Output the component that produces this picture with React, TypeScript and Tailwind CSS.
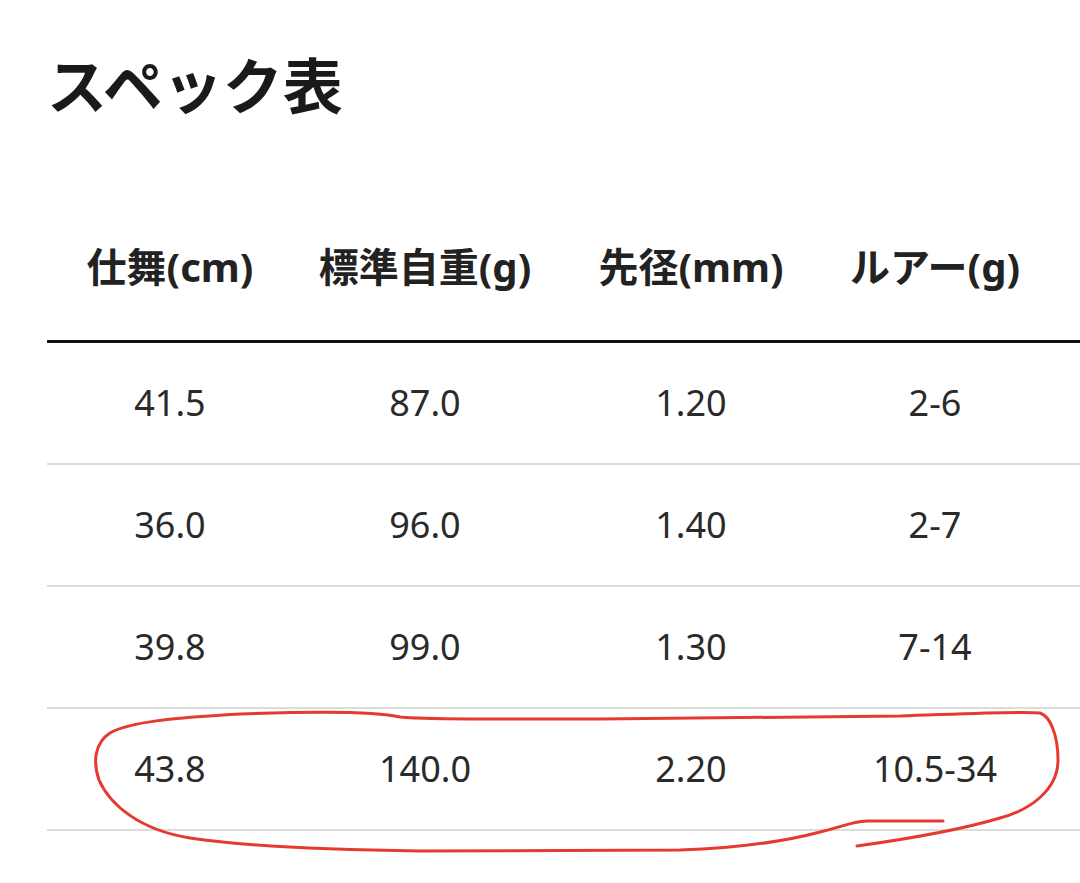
const headers = ['仕舞(cm)', '標準自重(g)', '先径(mm)', 'ルアー(g)']

const rows = [
  ['41.5', '87.0', '1.20', '2-6'],
  ['36.0', '96.0', '1.40', '2-7'],
  ['39.8', '99.0', '1.30', '7-14'],
  ['43.8', '140.0', '2.20', '10.5-34'],
]

const cols = 'grid grid-cols-[246px_264px_268px_220px]'

// hand-drawn red circle around the last row
const Scribble = () => (
  <svg
    className="pointer-events-none absolute left-0 top-0"
    width="1080"
    height="883"
    viewBox="0 0 1080 883"
    fill="none"
  >
    <path
      d="M943 821 L867 821 C850 822 845 826 820 832 C790 840 740 848 680 850 L420 851 C330 850 250 847 190 838 C140 830 110 805 99 780 C92 760 96 742 110 733 C130 722 170 718 240 714 C320 711 380 712 400 717 C430 720 520 719 600 719 L900 716 C960 714 1020 711 1040 713 C1050 716 1058 735 1058 760 C1058 790 1030 810 1000 818 C960 830 900 840 857 846"
      stroke="#e63a30"
      strokeWidth="3"
      strokeLinecap="round"
      strokeLinejoin="round"
    />
  </svg>
)

export default function App() {
  return (
    <div className="relative min-h-[883px] w-full overflow-hidden bg-white pl-[47px] pt-[56px] font-['Noto_Sans','Noto_Sans_CJK_JP',sans-serif]">
      <h1 className="text-[60px] font-bold leading-none text-[#1a1a1a]">スペック表</h1>

      <div className="mt-[78px]">
        <div className={`${cols} h-[149px] items-center border-b-[3px] border-[#111]`}>
          {headers.map(h => (
            <div key={h} className="text-center text-[40px] font-bold leading-none text-[#222]">
              {h}
            </div>
          ))}
        </div>

        {rows.map((row, i) => (
          <div key={i} className={`${cols} h-[122px] items-center border-b-2 border-[#dcdcdc]`}>
            {row.map((cell, j) => (
              <div key={j} className="text-center text-[36px] leading-none text-[#2a2a2a]">
                {cell}
              </div>
            ))}
          </div>
        ))}
      </div>

      <Scribble />
    </div>
  )
}
